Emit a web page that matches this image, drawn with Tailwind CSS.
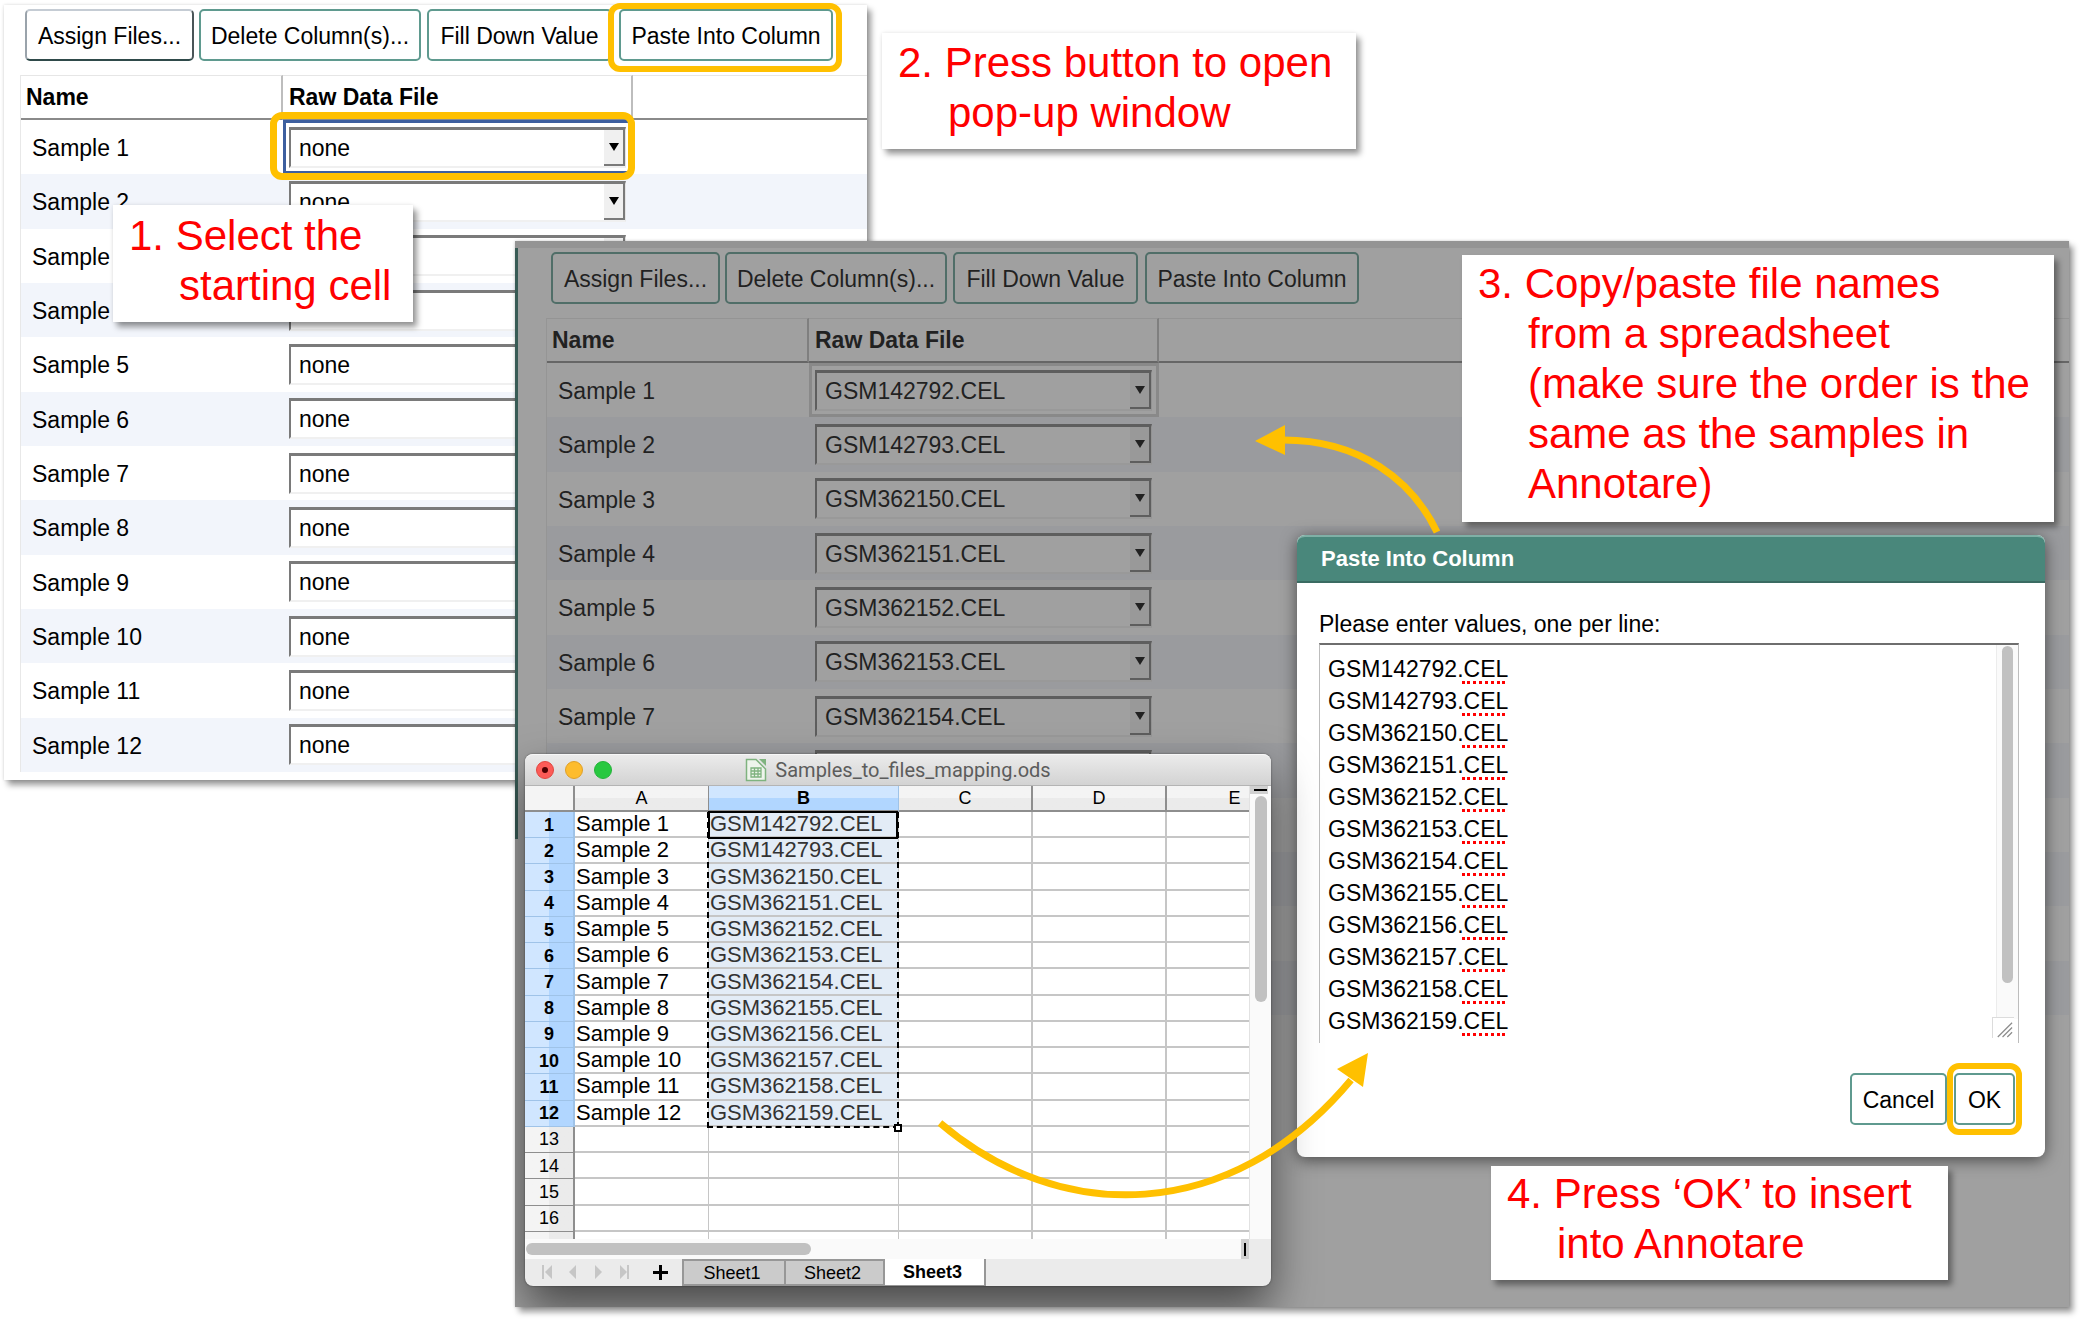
<!DOCTYPE html>
<html lang="en">
<head>
<meta charset="utf-8">
<title>Annotare: paste file names into a column</title>
<script src="https://cdn.jsdelivr.net/npm/@tailwindcss/browser@4"></script>
</head>
<body class="bg-white font-['Liberation_Sans',Arial,sans-serif] text-[23px] leading-8 text-black">
<main class="relative min-h-[1322px] overflow-hidden">

  <!-- Sample table before pasting -->
  <section class="absolute left-1 top-[5px] h-[775px] w-[863px] bg-white shadow-[4px_5px_6px_rgba(0,0,0,0.4),0_0_3px_rgba(0,0,0,0.15)]">
    <div class="h-full overflow-hidden pl-4 pt-1">
      <div class="flex pl-[5px]">
        <button class="mr-[5px] h-[52px] w-[169px] rounded-[5px] border-2 border-t-[#c5ccd4] border-l-[#9aa3ab] border-r-[#4a5558] border-b-[#2f4a4a] pt-[2px]">Assign Files...</button>
        <button class="mr-[6px] h-[52px] w-[222px] rounded-[5px] border-2 border-[#5f9a8f] pt-[2px]">Delete Column(s)...</button>
        <button class="mr-[7px] h-[52px] w-[185px] rounded-[5px] border-2 border-[#5f9a8f] pt-[2px]">Fill Down Value</button>
        <button class="h-[52px] w-[214px] rounded-[5px] border-2 border-[#5f9a8f] pt-[2px]">Paste Into Column</button>
      </div>
      <table class="mt-[14px] h-[697px] w-full table-fixed border-separate border-spacing-0 border-l border-[#e8e8e8]" data-samples="empty"></table>
    </div>
    <div class="pointer-events-none absolute left-[604px] -top-[2px] h-[69px] w-[234px] rounded-[12px] border-[6px] border-[#ffc000]"></div>
    <div class="pointer-events-none absolute left-[266px] top-[107px] h-[68px] w-[365px] rounded-[12px] border-[7px] border-[#ffc000]"></div>
  </section>

  <!-- Sample table after pasting, dimmed behind the dialog -->
  <section class="absolute left-[515px] right-[14px] top-[241px] h-[1066px] bg-white shadow-[4px_5px_6px_rgba(0,0,0,0.4),0_0_3px_rgba(0,0,0,0.2)]">
    <div class="relative h-full overflow-hidden">
      <div class="h-[7px] bg-[#e6e6e6]"></div>
      <div class="pl-[31px] pt-1">
        <div class="flex pl-[5px]">
          <button class="mr-[5px] h-[52px] w-[169px] rounded-[5px] border-2 border-[#5f9a8f] pt-[2px]">Assign Files...</button>
          <button class="mr-[6px] h-[52px] w-[222px] rounded-[5px] border-2 border-[#5f9a8f] pt-[2px]">Delete Column(s)...</button>
          <button class="mr-[7px] h-[52px] w-[185px] rounded-[5px] border-2 border-[#5f9a8f] pt-[2px]">Fill Down Value</button>
          <button class="h-[52px] w-[214px] rounded-[5px] border-2 border-[#5f9a8f] pt-[2px]">Paste Into Column</button>
        </div>
        <table class="mt-[14px] h-[697px] w-full table-fixed border-separate border-spacing-0 border-l border-[#e8e8e8]" data-samples="filled"></table>
      </div>
      <div class="absolute left-0 top-[7px] h-[591px] w-[3px] bg-[#2f7468]"></div>
      <div class="absolute inset-0 bg-[#414141]/50"></div>

      <!-- Paste dialog -->
      <form class="absolute left-[782px] top-[294px] w-[748px] overflow-visible rounded-[8px] bg-white shadow-[0_3px_16px_rgba(0,0,0,0.55)]" onsubmit="return false">
        <h2 class="flex h-12 items-center rounded-t-[8px] border-t-2 border-b-2 border-t-[#7fb0a6] border-b-[#3a6b62] bg-[#49877b] pl-6 text-[22px] font-bold text-white">Paste Into Column</h2>
        <div class="pt-[25px] pr-[26px] pb-8 pl-[22px]">
          <label for="values" class="block">Please enter values, one per line:</label>
          <div class="relative mt-[3px] h-[400px]">
            <textarea id="values" spellcheck="false" class="block h-full w-full resize-none overflow-hidden border-x border-t-2 border-x-[#bdbdbd] border-t-[#6e6e6e] bg-transparent pt-2 pl-2 leading-8 outline-none" data-values></textarea>
            <div class="pointer-events-none absolute left-[143px] top-[9px] w-[43px]" data-marks></div>
            <div class="absolute right-px top-[2px] h-[374px] w-[22px] border-l border-[#ececec] bg-[#fafafa]">
              <div class="mt-px ml-[5px] h-[337px] w-[11px] rounded-full bg-[#c1c1c1]"></div>
            </div>
            <div class="absolute right-[5px] bottom-[5px] h-[21px] w-[22px] border-t border-l border-[#dcdcdc] bg-white">
              <svg class="h-full w-full" viewBox="0 0 22 21" fill="none" stroke="#8d8d8d" stroke-width="1.3"><path d="M5 20 20 5M10 20 20 10M15 20 20 15"/></svg>
            </div>
          </div>
          <div class="mt-[30px] mr-1 flex justify-end gap-[7px]">
            <button type="button" class="h-[52px] w-[97px] rounded-[5px] border-2 border-[#5f9a8f] pt-[2px]">Cancel</button>
            <button type="submit" class="relative h-[52px] w-[61px] rounded-[5px] border-2 border-[#5f9a8f] pt-[2px]">OK
              <span class="pointer-events-none absolute -inset-x-[9px] -inset-y-[12px] rounded-[12px] border-[6px] border-[#ffc000]"></span>
            </button>
          </div>
        </div>
      </form>

      <!-- Spreadsheet window -->
      <div class="absolute left-[10px] top-[513px] flex h-[532px] w-[746px] flex-col rounded-[8px] bg-[#ebebeb] shadow-[0_22px_45px_rgba(0,0,0,0.55),0_0_2px_rgba(0,0,0,0.5)]">
        <div class="relative flex h-8 items-center justify-center gap-2 rounded-t-[8px] border-t border-b border-t-[#f7f7f7] border-b-[#b4b4b4] bg-linear-to-b from-[#ebebeb] to-[#d3d3d3]">
          <div class="absolute left-[11px] flex gap-[11px]">
            <span class="flex size-[18px] items-center justify-center rounded-full border border-[#e2463f] bg-[#fc5b57]"><span class="size-[6px] rounded-full bg-[#4d0000]"></span></span>
            <span class="size-[18px] rounded-full border border-[#e0a028] bg-[#fdbc2e]"></span>
            <span class="size-[18px] rounded-full border border-[#24b33a] bg-[#28c840]"></span>
          </div>
          <svg class="h-6 w-[22px]" viewBox="0 0 22 24" fill="none"><path d="M1.5 1.5H11L20.500 11V22.500H1.500Z" fill="#eef4ec" stroke="#7fb37f" stroke-width="1.500"/><path d="M14 1H21V8Z" fill="#7fb37f"/><path d="M6 10H16V19H6ZM6 13H16M6 16H16M9.500 10V19M13 10V19" stroke="#7fb37f" stroke-width="1.300"/></svg>
          <span class="font-[Roboto,sans-serif] text-[20px] leading-6 text-[#5c5c5c]">Samples_to_files_mapping.ods</span>
        </div>
        <div class="flex h-[453px]">
          <div class="relative h-full flex-1 overflow-hidden bg-white">
            <table class="h-[472px] w-[777px] table-fixed border-separate border-spacing-0 text-[22px] leading-6" data-sheet></table>
            <div class="pointer-events-none absolute left-[182px] top-[26px] h-[316px] w-[192px] border-2 border-t-0 border-dashed border-black"></div>
            <div class="pointer-events-none absolute left-[183px] top-[25px] h-[28px] w-[190px] border-2 border-black"></div>
            <div class="pointer-events-none absolute left-[369px] top-[338px] size-2 border-2 border-black bg-white"></div>
          </div>
          <div class="w-[22px] border-l border-[#e2e2e2] bg-[#fafafa]">
            <div class="flex h-2 w-[18px] items-center bg-[#d0d0d0] pl-1"><span class="h-[2px] w-[13px] bg-black"></span></div>
            <div class="mt-[2px] ml-[5px] h-[206px] w-[12px] rounded-full bg-[#c1c1c1]"></div>
          </div>
        </div>
        <div class="mr-[22px] flex h-5 items-center bg-[#fafafa] pl-px">
          <div class="h-3 w-[285px] rounded-full bg-[#c1c1c1]"></div>
          <div class="ml-auto flex h-5 w-2 items-center justify-center bg-[#d0d0d0]"><span class="h-[13px] w-[2px] bg-black"></span></div>
        </div>
        <div class="flex h-[27px] items-stretch text-[18px] leading-6">
          <svg class="w-[157px]" viewBox="0 0 157 27" fill="#c6c6c6"><path d="M17 6h2v14h-2zM27 6v14l-7-7zM51 6v14l-7-7zM70 6v14l7-7zM95 6v14l7-7zM102 6h2v14h-2z"/><path d="M128 12h6V6h3v6h6v3h-6v6h-3v-6h-6z" fill="#000"/></svg>
          <button class="w-[102px] border-2 border-r-0 border-[#979797] bg-[#cbcbcb] pr-1">Sheet1</button>
          <button class="w-[101px] border-2 border-[#979797] bg-[#cbcbcb] pr-1">Sheet2</button>
          <button class="w-[101px] border-r-2 border-b border-[#979797] bg-white pr-1 font-bold">Sheet3</button>
        </div>
      </div>
    </div>
  </section>

  <!-- Arrows between the steps -->
  <svg class="pointer-events-none absolute left-0 top-0" width="2083" height="1322" viewBox="0 0 2083 1322" fill="none">
    <g stroke="#ffc000" stroke-width="7">
      <path d="M1437 532C1412 480 1360 440 1283 440"/>
      <path d="M940 1123C1060 1225 1230 1225 1351 1080"/>
    </g>
    <path d="M1255 441 1285 425V455ZM1368 1053 1337 1069 1363 1087Z" fill="#ffc000"/>
  </svg>

  <!-- Step notes -->
  <p class="absolute left-[113px] top-[205px] h-[117px] w-[300px] bg-white pt-[6px] pl-[66px] -indent-[50px] text-[42px] leading-[50px] text-[#ff0000] shadow-[4px_5px_6px_rgba(0,0,0,0.4),0_0_4px_rgba(0,0,0,0.1)]">1. Select the<br>starting cell</p>
  <p class="absolute left-[882px] top-[33px] h-[116px] w-[474px] bg-white pt-[5px] pl-[66px] -indent-[50px] text-[42px] leading-[50px] text-[#ff0000] shadow-[4px_5px_6px_rgba(0,0,0,0.4),0_0_4px_rgba(0,0,0,0.1)]">2. Press button to open<br>pop-up window</p>
  <p class="absolute left-[1462px] top-[255px] h-[267px] w-[592px] bg-white pt-1 pl-[66px] -indent-[50px] text-[42px] leading-[50px] text-[#ff0000] shadow-[4px_5px_6px_rgba(0,0,0,0.4)]">3. Copy/paste file names<br>from a spreadsheet<br>(make sure the order is the<br>same as the samples in<br>Annotare)</p>
  <p class="absolute left-[1491px] top-[1166px] h-[114px] w-[457px] bg-white pt-[3px] pl-[66px] -indent-[50px] text-[42px] leading-[50px] text-[#ff0000] shadow-[4px_5px_6px_rgba(0,0,0,0.4)]">4. Press ‘OK’ to insert<br>into Annotare</p>
</main>

<script>
  const files = ['GSM142792', 'GSM142793', 'GSM362150', 'GSM362151', 'GSM362152', 'GSM362153', 'GSM362154', 'GSM362155', 'GSM362156', 'GSM362157', 'GSM362158', 'GSM362159'].map(f => f + '.CEL');

  for (const table of document.querySelectorAll('[data-samples]')) {
    const filled = table.dataset.samples === 'filled';
    const focus = filled ? 'border-[#d0d0d0]' : 'border-[#3d5f9f]';
    table.innerHTML = `
      <colgroup><col class="w-[262px]"><col class="w-[350px]"><col></colgroup>
      <thead><tr class="h-[45px] text-left">
        <th class="border-t border-r-2 border-b-2 border-t-[#e6e6e6] border-r-[#bdbdbd] border-b-[#8a8a8a] pl-[5px]">Name</th>
        <th class="border-t border-r-2 border-b-2 border-t-[#e6e6e6] border-r-[#bdbdbd] border-b-[#8a8a8a] pl-[6px]">Raw Data File</th>
        <th class="border-t border-b-2 border-t-[#e6e6e6] border-b-[#8a8a8a]"></th>
      </tr></thead>
      <tbody>${files.map((f, i) => `
        <tr class="even:bg-[#f2f5fb]">
          <td class="pt-[2px] pl-[11px]">Sample ${i + 1}</td>
          <td class="relative p-0">
            ${i === 0 ? `<div class="absolute inset-0 border-[3px] ${focus}"></div>` : ''}
            <div class="relative mr-[7px] ml-[6px]">
              <select aria-label="Raw data file for sample ${i + 1}" class="block h-[41px] w-full appearance-none border-t-[3px] border-r border-b-2 border-l-2 border-t-[#7a7a7a] border-r-[#e5e5e5] border-b-[#f0f0f0] border-l-[#7a7a7a] bg-white pl-2"><option>${filled ? f : 'none'}</option></select>
              <span class="pointer-events-none absolute top-[3px] right-px flex h-[36px] w-[21px] items-center justify-center border-r-2 border-b-2 border-[#7a7a7a] bg-[#f0f0f0]"><svg class="h-2 w-[10px]" viewBox="0 0 10 8"><path d="M0 0H10L5 8Z"/></svg></span>
            </div>
          </td>
          <td></td>
        </tr>`).join('')}</tbody>`;
  }

  document.querySelector('[data-values]').value = files.join('\n');
  document.querySelector('[data-marks]').innerHTML = files.map(() => '<div class="h-8 border-b-[3px] border-dotted border-[#ff0000]"></div>').join('');

  const sheetRows = Array.from({ length: 17 }, (_, i) => {
    const on = i < 12;
    return `<tr class="h-[26px]">
      <th class="border-r-2 border-b p-0 text-[18px] ${on ? 'border-[#9fc3e8] bg-linear-to-r from-[#d0e6ff] from-50% to-[#b1d6ff] to-50% font-bold' : 'border-[#8e8e8e] bg-linear-to-r from-[#f4f4f4] from-50% to-[#ebebeb] to-50% font-normal'}">${i < 16 ? i + 1 : ''}</th>
      <td class="border-r border-b-2 border-[#c6c6c6] p-0 pl-px">${on ? 'Sample ' + (i + 1) : ''}</td>
      <td class="border-r border-b-2 border-[#c6c6c6] p-0 pl-px ${on ? 'bg-[#e3ecf6] text-[#333]' : ''}">${on ? files[i] : ''}</td>
      <td class="border-r-2 border-b-2 border-[#c6c6c6] p-0"></td>
      <td class="border-r-2 border-b-2 border-[#c6c6c6] p-0"></td>
      <td class="border-b-2 border-[#c6c6c6] p-0"></td>
    </tr>`;
  }).join('');
  document.querySelector('[data-sheet]').innerHTML = `
    <colgroup><col class="w-[50px]"><col class="w-[134px]"><col class="w-[190px]"><col class="w-[134px]"><col class="w-[134px]"><col class="w-[135px]"></colgroup>
    <thead><tr class="h-[26px] text-[18px]">
      <th class="border-r-2 border-b-2 border-[#8e8e8e] bg-[#f4f4f4] p-0"></th>
      <th class="border-r border-b-2 border-[#8e8e8e] bg-linear-to-b from-[#f4f4f4] from-50% to-[#ebebeb] to-50% p-0 font-normal">A</th>
      <th class="border-r border-b-2 border-r-[#9fc3e8] border-b-[#8e8e8e] bg-linear-to-b from-[#d0e6ff] from-50% to-[#b1d6ff] to-50% p-0 font-bold">B</th>
      <th class="border-r-2 border-b-2 border-[#8e8e8e] bg-linear-to-b from-[#f4f4f4] from-50% to-[#ebebeb] to-50% p-0 font-normal">C</th>
      <th class="border-r-2 border-b-2 border-[#8e8e8e] bg-linear-to-b from-[#f4f4f4] from-50% to-[#ebebeb] to-50% p-0 font-normal">D</th>
      <th class="border-b-2 border-[#8e8e8e] bg-linear-to-b from-[#f4f4f4] from-50% to-[#ebebeb] to-50% p-0 font-normal">E</th>
    </tr></thead>
    <tbody>${sheetRows}</tbody>`;
</script>
</body>
</html>
